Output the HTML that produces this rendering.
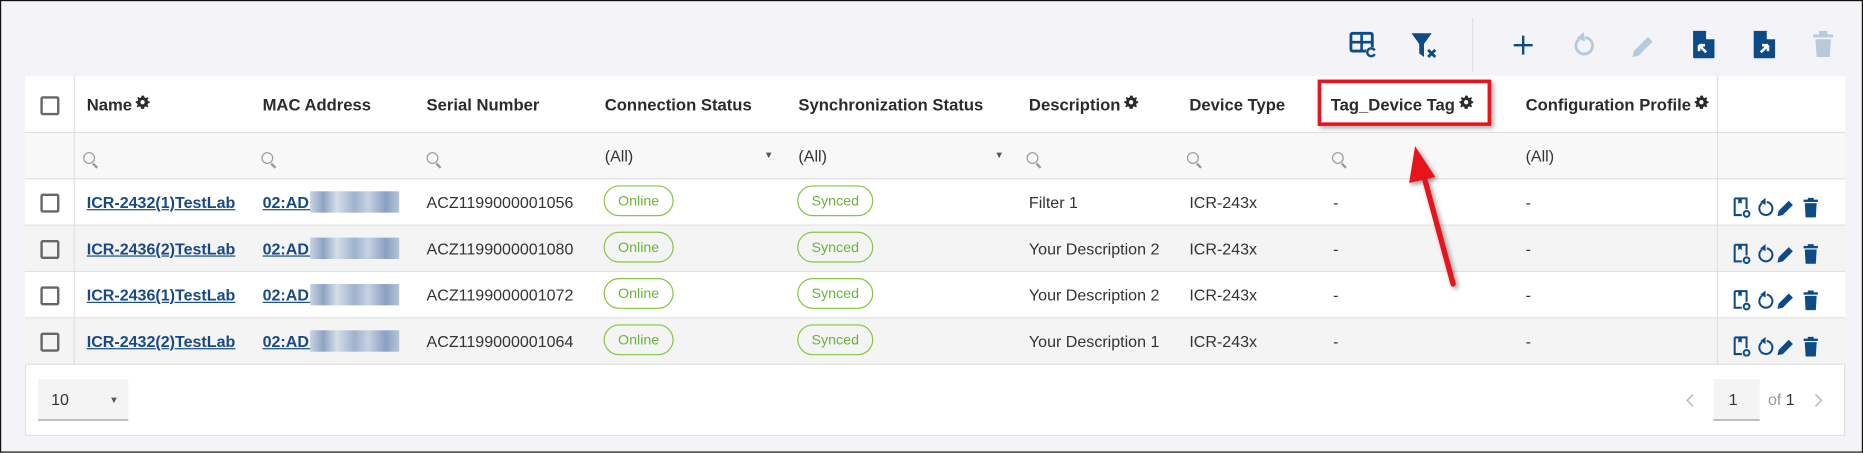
<!DOCTYPE html>
<html><head><meta charset="utf-8"><style>
*{box-sizing:border-box;margin:0;padding:0}
html,body{width:1863px;height:453px;overflow:hidden;background:#f4f4f8}
#w{position:absolute;left:0;top:0;width:1568px;height:381.3px;transform:scale(1.18814);transform-origin:0 0;font-family:"Liberation Sans",Arial,sans-serif;font-size:13.5px;color:#333;border:1px solid #111;background:#f4f4f8}
.a{position:absolute}
.hd{font-weight:bold;font-size:14px;color:#2b2b2b;top:79px}
.g{display:inline-block;width:12px;height:12px;vertical-align:1px;margin-left:3px}
.row{position:absolute;left:20px;width:1532px;height:39px;border-bottom:1px solid #e0e0e0}
.cb{position:absolute;left:33px;width:16px;height:16px;border:2px solid #666;border-radius:2px}
.lnk{color:#174a85;font-weight:bold;text-decoration:underline}
.pill{position:absolute;height:26px;border:1px solid #86c443;border-radius:13px;color:#6cb33a;font-size:12px;line-height:24px;text-align:center}
.mag{position:absolute;width:10px;height:10px;border:1.5px solid #999;border-radius:50%}
.mag:after{content:"";position:absolute;left:8px;top:8px;width:5px;height:1.5px;background:#999;transform:rotate(45deg);transform-origin:0 0}
.blur{position:absolute;width:75px;height:18px;background:linear-gradient(90deg,#c9d3e3,#8ea3c4 15%,#d6dde8 30%,#9fb2cf 50%,#c7d1e0 65%,#8aa0c3 85%,#b6c4d8)}
</style></head><body><div id="w">
<svg width="0" height="0" style="position:absolute"><defs><g id="gear"><path d="M6 0.5l1.3 0 .3 1.6 1.2.5 1.3-.9.9.9-.9 1.3.5 1.2 1.6.3v1.3l-1.6.3-.5 1.2.9 1.3-.9.9-1.3-.9-1.2.5-.3 1.6H4.7l-.3-1.6-1.2-.5-1.3.9-.9-.9.9-1.3-.5-1.2L.3 6.6V5.3l1.6-.3.5-1.2-.9-1.3.9-.9 1.3.9 1.2-.5.3-1.6z" fill="#2b2b2b"/><circle cx="6" cy="6" r="1.8" fill="#fff"/></g></defs></svg>
<!-- toolbar -->
<svg class="a" style="left:1134px;top:25px" width="26" height="24" viewBox="0 0 26 24"><rect x="2" y="2" width="18" height="15" rx="1.5" fill="none" stroke="#0d4b87" stroke-width="2.4"/><line x1="2" y1="9.5" x2="20" y2="9.5" stroke="#0d4b87" stroke-width="2.2"/><line x1="11" y1="2" x2="11" y2="17" stroke="#0d4b87" stroke-width="2.2"/><circle cx="19" cy="18" r="4.5" fill="#f4f4f8"/><path d="M22 16.5a3.3 3.3 0 1 0 0 3" fill="none" stroke="#0d4b87" stroke-width="2"/></svg>
<svg class="a" style="left:1186px;top:25px" width="26" height="26" viewBox="0 0 26 26"><path d="M1 2h17l-6.5 9v11l-4-3v-8z" fill="#0d4b87"/><path d="M15 16l6 6M21 16l-6 6" stroke="#0d4b87" stroke-width="2.4"/></svg>
<div class="a" style="left:1238px;top:14px;width:1px;height:45px;background:#ddd"></div>
<svg class="a" style="left:1272px;top:28px" width="18" height="18"><path d="M9 1v16M1 9h16" stroke="#0d4b87" stroke-width="2"/></svg>
<svg class="a" style="left:1322px;top:26px" width="20" height="22" viewBox="0 0 20 22"><path d="M6 6a7 7 0 1 0 5-1.5" fill="none" stroke="#b6cadc" stroke-width="2.4"/><path d="M10 0l-6 5 7 3z" fill="#b6cadc"/></svg>
<svg class="a" style="left:1371px;top:27px" width="22" height="22" viewBox="0 0 22 22"><path d="M2 20l1-5L15 3l4 4L7 19z" fill="#b6cadc"/></svg>
<svg class="a" style="left:1423px;top:24px" width="20" height="25" viewBox="0 0 20 25"><path d="M1 1h11l7 7v15a1 1 0 0 1-1 1H2a1 1 0 0 1-1-1z" fill="#0d4b87"/><path d="M12 1v7h7" fill="#fff"/><path d="M6 13l6 6M6 13v5M6 13h5" stroke="#fff" stroke-width="2.2" fill="none"/></svg>
<svg class="a" style="left:1474px;top:24px" width="20" height="25" viewBox="0 0 20 25"><path d="M1 1h11l7 7v15a1 1 0 0 1-1 1H2a1 1 0 0 1-1-1z" fill="#0d4b87"/><path d="M12 1v7h7" fill="#fff"/><path d="M13 13l-6 6M13 13v5M13 13H8" stroke="#fff" stroke-width="2.2" fill="none"/></svg>
<svg class="a" style="left:1525px;top:25px" width="17" height="22" viewBox="0 0 17 22"><rect x="0" y="3" width="17" height="2.5" fill="#b6cadc"/><rect x="5" y="0" width="7" height="3" fill="#b6cadc"/><path d="M2 7h13l-1 15H3z" fill="#b6cadc"/></svg>
<!-- table -->
<div class="a" style="left:20px;top:63px;width:1532px;height:303px;background:#fff;border:1px solid #e0e0e0"></div>
<div class="row" style="top:63px;height:48px;background:#fff"></div>
<div class="row" style="top:111px;height:39px;background:#f8f8f8"></div>
<div class="row" style="top:150px;background:#fff"></div>
<div class="row" style="top:189px;background:#f4f4f4"></div>
<div class="row" style="top:228px;background:#fff"></div>
<div class="row" style="top:267px;background:#f4f4f4"></div>
<div class="a" style="left:61px;top:63px;width:1px;height:243px;background:#e0e0e0"></div>
<div class="a" style="left:1444px;top:63px;width:1px;height:243px;background:#e0e0e0"></div>
<div class="cb" style="top:80px"></div>
<div class="a hd" style="left:72px">Name<svg class="g" viewBox="0 0 12 12"><use href="#gear"/></svg></div>
<div class="a hd" style="left:220px">MAC Address</div>
<div class="a hd" style="left:358px">Serial Number</div>
<div class="a hd" style="left:508px">Connection Status</div>
<div class="a hd" style="left:671px">Synchronization Status</div>
<div class="a hd" style="left:865px">Description<svg class="g" viewBox="0 0 12 12"><use href="#gear"/></svg></div>
<div class="a hd" style="left:1000px">Device Type</div>
<div class="a hd" style="left:1119px">Tag_Device Tag<svg class="g" viewBox="0 0 12 12"><use href="#gear"/></svg></div>
<div class="a hd" style="left:1283px">Configuration Profile<svg class="g" viewBox="0 0 12 12"><use href="#gear"/></svg></div>
<div class="a" style="left:1108px;top:66px;width:146px;height:39px;border:3px solid #e8141b;box-shadow:2px 2px 4px rgba(0,0,0,.35)"></div>
<!-- filter row -->
<div class="mag" style="left:69px;top:127px"></div>
<div class="mag" style="left:219px;top:127px"></div>
<div class="mag" style="left:358px;top:127px"></div>
<div class="mag" style="left:863px;top:127px"></div>
<div class="mag" style="left:998px;top:127px"></div>
<div class="mag" style="left:1120px;top:127px"></div>
<div class="a" style="left:508px;top:123px">(All)</div><div class="a" style="left:642px;top:125px;font-size:8px;color:#555">▼</div>
<div class="a" style="left:671px;top:123px">(All)</div><div class="a" style="left:836px;top:125px;font-size:8px;color:#555">▼</div>
<div class="a" style="left:1283px;top:123px">(All)</div>
<!-- rows -->
<div class="cb" style="top:162px"></div><div class="cb" style="top:201px"></div><div class="cb" style="top:240px"></div><div class="cb" style="top:279px"></div>
<div class="a lnk" style="left:72px;top:162px">ICR-2432(1)TestLab</div>
<div class="a lnk" style="left:72px;top:201px">ICR-2436(2)TestLab</div>
<div class="a lnk" style="left:72px;top:240px">ICR-2436(1)TestLab</div>
<div class="a lnk" style="left:72px;top:279px">ICR-2432(2)TestLab</div>
<div class="a lnk" style="left:220px;top:162px">02:AD:</div><div class="blur" style="left:260px;top:160px"></div>
<div class="a lnk" style="left:220px;top:201px">02:AD:</div><div class="blur" style="left:260px;top:199px"></div>
<div class="a lnk" style="left:220px;top:240px">02:AD:</div><div class="blur" style="left:260px;top:238px"></div>
<div class="a lnk" style="left:220px;top:279px">02:AD:</div><div class="blur" style="left:260px;top:277px"></div>
<div class="a" style="left:358px;top:162px">ACZ1199000001056</div>
<div class="a" style="left:358px;top:201px">ACZ1199000001080</div>
<div class="a" style="left:358px;top:240px">ACZ1199000001072</div>
<div class="a" style="left:358px;top:279px">ACZ1199000001064</div>
<div class="pill" style="left:507px;top:155px;width:59px">Online</div><div class="pill" style="left:507px;top:194px;width:59px">Online</div><div class="pill" style="left:507px;top:233px;width:59px">Online</div><div class="pill" style="left:507px;top:272px;width:59px">Online</div>
<div class="pill" style="left:670px;top:155px;width:64px">Synced</div><div class="pill" style="left:670px;top:194px;width:64px">Synced</div><div class="pill" style="left:670px;top:233px;width:64px">Synced</div><div class="pill" style="left:670px;top:272px;width:64px">Synced</div>
<div class="a" style="left:865px;top:162px">Filter 1</div>
<div class="a" style="left:865px;top:201px">Your Description 2</div>
<div class="a" style="left:865px;top:240px">Your Description 2</div>
<div class="a" style="left:865px;top:279px">Your Description 1</div>
<div class="a" style="left:1000px;top:162px">ICR-243x</div><div class="a" style="left:1000px;top:201px">ICR-243x</div><div class="a" style="left:1000px;top:240px">ICR-243x</div><div class="a" style="left:1000px;top:279px">ICR-243x</div>
<div class="a" style="left:1121px;top:162px">-</div><div class="a" style="left:1121px;top:201px">-</div><div class="a" style="left:1121px;top:240px">-</div><div class="a" style="left:1121px;top:279px">-</div>
<div class="a" style="left:1283px;top:162px">-</div><div class="a" style="left:1283px;top:201px">-</div><div class="a" style="left:1283px;top:240px">-</div><div class="a" style="left:1283px;top:279px">-</div>
<!-- action icons -->
<svg class="a" style="left:1458px;top:165px" width="84" height="134" viewBox="0 0 84 134">
<defs><g id="ac">
<path d="M1 1h10v9M1 1v14h6" fill="none" stroke="#0d4b87" stroke-width="1.7"/><path d="M4 1v4.5l1.5-1 1.5 1V1" fill="#0d4b87"/><circle cx="11" cy="14" r="2.4" fill="none" stroke="#0d4b87" stroke-width="1.7"/>
<path d="M24 5a5.5 5.5 0 1 0 4-1" fill="none" stroke="#0d4b87" stroke-width="1.7"/><path d="M27 0.5l-4.5 3.5 4.5 2.5z" fill="#0d4b87"/>
<path d="M37 16l1-4.5 8.5-8.5 3.5 3.5-8.5 8.5z" fill="#0d4b87"/>
<rect x="59" y="2" width="12" height="2" fill="#0d4b87"/><rect x="62.5" y="0.5" width="5" height="2" fill="#0d4b87"/><path d="M60 5h10l-.7 12h-8.6z" fill="#0d4b87"/>
</g></defs>
<use href="#ac" y="0"/><use href="#ac" y="39"/><use href="#ac" y="78"/><use href="#ac" y="117"/></svg>
<!-- arrow -->
<svg class="a" style="left:1170px;top:110px" width="70" height="140" viewBox="0 0 70 140"><g style="filter:drop-shadow(2px 2px 2px rgba(0,0,0,.4))"><line x1="52" y1="128" x2="26" y2="32" stroke="#e8141b" stroke-width="4.5" stroke-linecap="round"/><path d="M20 12L37 38L15 43z" fill="#e8141b"/></g></svg>
<!-- footer -->
<div class="a" style="left:31px;top:318px;width:76px;height:35px;background:#f4f4f4;border-bottom:1px solid #999"></div>
<div class="a" style="left:42px;top:328px">10</div><div class="a" style="left:91px;top:331px;font-size:8px;color:#555">▼</div>
<svg class="a" style="left:1418px;top:330px" width="8" height="12"><path d="M6 1L1 6l5 5" fill="none" stroke="#bbb" stroke-width="1.3"/></svg>
<div class="a" style="left:1441px;top:318px;width:39px;height:35px;background:#f4f4f4;border-bottom:1px solid #999"></div>
<div class="a" style="left:1454px;top:328px">1</div>
<div class="a" style="left:1487px;top:328px"><span style="color:#999">of</span> 1</div>
<svg class="a" style="left:1525px;top:330px" width="8" height="12"><path d="M2 1l5 5-5 5" fill="none" stroke="#bbb" stroke-width="1.3"/></svg>
</div></body></html>
